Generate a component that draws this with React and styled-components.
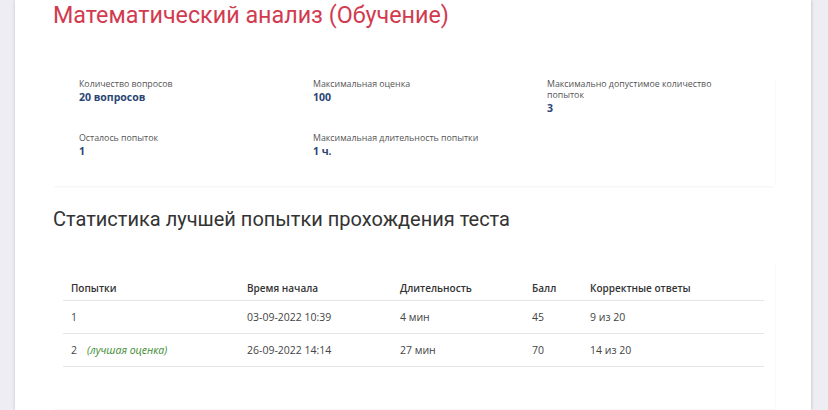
import styled, { createGlobalStyle } from "styled-components";

const GlobalStyle = createGlobalStyle`
  body {
    margin: 0;
    background: #ededf3;
    font-family: "Open Sans", "Noto Sans", sans-serif;
    overflow: hidden;
  }
`;

const Page = styled.div`
  display: flex;
  height: 410px;
`;

const Panel = styled.main`
  margin-left: 15px;
  width: 796px;
  background: #fff;
  box-shadow: 1px 0 3px rgba(0, 0, 0, 0.12), -1px 0 3px rgba(0, 0, 0, 0.08);
  padding: 0 36px 0 38px;
  box-sizing: border-box;
`;

const Title = styled.h1`
  margin: 0;
  padding-top: 1px;
  font-family: "Roboto", sans-serif;
  font-weight: 400;
  font-size: 23.3px;
  line-height: 28px;
  color: #d23a50;
`;

const Card = styled.section`
  background: #fff;
  box-shadow: 0 2px 2px -1px rgba(0, 0, 0, 0.05), 1px 0 1px rgba(0, 0, 0, 0.02);
  margin-top: ${(p) => p.$top}px;
  padding: ${(p) => p.$pad};
`;

const InfoGrid = styled.div`
  display: grid;
  grid-template-columns: repeat(3, 234px);
  row-gap: 18px;
`;

const Info = styled.div`
  display: flex;
  flex-direction: column;
`;

const Label = styled.span`
  font-size: 8.8px;
  line-height: 11px;
  color: #555;
  max-width: 180px;
`;

const Value = styled.span`
  font-size: 10.5px;
  line-height: 14px;
  font-weight: 700;
  color: #2a4574;
`;

const Heading = styled.h2`
  margin: 19px 0 0;
  font-family: "Roboto", sans-serif;
  font-weight: 400;
  font-size: 20px;
  line-height: 28px;
  color: #333;
`;

const Table = styled.table`
  width: 100%;
  table-layout: fixed;
  border-collapse: collapse;
  font-size: 10.5px;
  color: #444;
`;

const Th = styled.th`
  text-align: left;
  font-size: 10px;
  font-weight: 600;
  color: #333;
  height: 25px;
  padding: 0 0 0 8px;
  border-bottom: 1px solid #e6e6e6;
  width: ${(p) => p.$w || "auto"};
`;

const Td = styled.td`
  height: 32px;
  padding: 0 0 0 8px;
  border-bottom: 1px solid #e6e6e6;
`;

const Best = styled.em`
  margin-left: 10px;
  color: #3b8b32;
  font-size: 10.5px;
`;

const info = [
  { label: "Количество вопросов", value: "20 вопросов" },
  { label: "Максимальная оценка", value: "100" },
  { label: "Максимально допустимое количество попыток", value: "3" },
  { label: "Осталось попыток", value: "1" },
  { label: "Максимальная длительность попытки", value: "1 ч." },
];

const attempts = [
  { n: "1", start: "03-09-2022 10:39", dur: "4 мин", score: "45", correct: "9 из 20" },
  { n: "2", best: true, start: "26-09-2022 14:14", dur: "27 мин", score: "70", correct: "14 из 20" },
];

export default function App() {
  return (
    <>
      <GlobalStyle />
      <Page>
        <Panel>
          <Title>Математический анализ (Обучение)</Title>
          <Card $top={49} $pad="1px 0 28px 26px">
            <InfoGrid>
              {info.map((i) => (
                <Info key={i.label}>
                  <Label>{i.label}</Label>
                  <Value>{i.value}</Value>
                </Info>
              ))}
            </InfoGrid>
          </Card>
          <Heading>Статистика лучшей попытки прохождения теста</Heading>
          <Card $top={30} $pad="12px 11px 42px 10px">
            <Table>
              <thead>
                <tr>
                  <Th $w="168px">Попытки</Th>
                  <Th $w="145px">Время начала</Th>
                  <Th $w="124px">Длительность</Th>
                  <Th $w="50px">Балл</Th>
                  <Th>Корректные ответы</Th>
                </tr>
              </thead>
              <tbody>
                {attempts.map((a) => (
                  <tr key={a.n}>
                    <Td>
                      {a.n}
                      {a.best && <Best>(лучшая оценка)</Best>}
                    </Td>
                    <Td>{a.start}</Td>
                    <Td>{a.dur}</Td>
                    <Td>{a.score}</Td>
                    <Td>{a.correct}</Td>
                  </tr>
                ))}
              </tbody>
            </Table>
          </Card>
        </Panel>
      </Page>
    </>
  );
}
